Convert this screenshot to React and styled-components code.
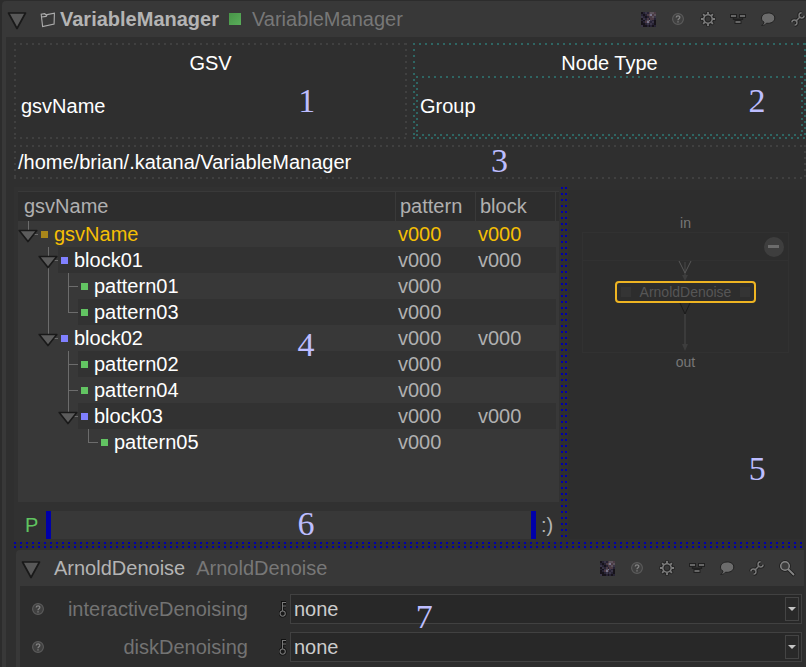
import React from 'react';
import styled, { createGlobalStyle, css } from 'styled-components';

const Global = createGlobalStyle`
  * { box-sizing: border-box; }
  body {
    margin: 0;
    background: #2c2c2c;
    color: #fff;
    font: 20px/26px "Liberation Sans", Arial, sans-serif;
    overflow-x: hidden;
  }
  button, input, select { font: inherit; color: inherit; }
`;

const dots = (color) => css`
  background-image:
    repeating-linear-gradient(90deg, ${color} 0 2px, transparent 2px 6px),
    repeating-linear-gradient(90deg, ${color} 0 2px, transparent 2px 6px),
    repeating-linear-gradient(180deg, ${color} 0 2px, transparent 2px 6px),
    repeating-linear-gradient(180deg, ${color} 0 2px, transparent 2px 6px);
  background-repeat: no-repeat;
`;

const Page = styled.main`
  padding: 1px 0 0 2px;
  overflow: hidden;
`;

const Panel = styled.section`
  background: #383838;
  border-radius: 4px 0 0 0;
  padding-left: 4px;
`;

const PanelHeader = styled.header`
  display: flex;
  align-items: center;
  height: 36px;
  overflow: hidden;
  white-space: nowrap;
`;

const Toggle = styled.button`
  display: flex;
  flex: none;
  width: 34px;
  padding: 4px 0 0 1px;
  border: 0;
  background: none;
`;

const Title = styled.h1`
  margin: 0;
  font-size: 20px;
  font-weight: ${(p) => (p.$bold ? 700 : 400)};
  color: #b4b4b4;
`;

const Subtitle = styled.span`
  margin-left: 11px;
  color: #777;
`;

const Status = styled.span`
  flex: none;
  width: 12px;
  height: 12px;
  margin-left: 10px;
  background: linear-gradient(135deg, #489448, #5aae5a);
`;

const FolderMark = styled.span`
  display: flex;
  flex: none;
  width: 20px;
`;

const Tools = styled.nav`
  display: flex;
  flex: none;
  margin-left: auto;
  margin-right: ${(p) => p.$shift || 0}px;
`;

const ToolButton = styled.button`
  display: grid;
  place-items: center;
  width: 30px;
  height: 30px;
  padding: 0;
  border: 0;
  background: none;
`;

const Content = styled.div`
  background: #2f2f2f;
  padding: 6px 0 5px 8px;
`;

const TopRow = styled.div`
  display: grid;
  grid-template-columns: 1fr 1fr;
  gap: 6px;
`;

const DottedBox = styled.section`
  position: relative;
  padding: 3px;
  ${(p) => dots(p.$color)}
  background-position: top left, bottom left, top left, top right;
  background-size: 100% 2px, 100% 2px, 2px 100%, 2px 100%;
`;

const BoxTitle = styled.h2`
  margin: 0;
  height: 30px;
  padding-top: 4px;
  font-size: 20px;
  font-weight: 400;
  text-align: center;
`;

const ValueBox = styled.div`
  height: 60px;
  padding-left: 4px;
  line-height: 60px;
  ${(p) => p.$color && dots(p.$color)}
  background-position: top left, bottom left, top left, top right;
  background-size: 100% 2px, 100% 2px, 2px 100%, 2px 100%;
`;

const PathBox = styled(DottedBox)`
  margin-top: 6px;
  height: 34px;
  padding-left: 4px;
  line-height: 28px;
`;

const Marker = styled.span`
  position: absolute;
  color: #bdbdff;
  font: 34px/34px "Liberation Serif", "Times New Roman", serif;
  pointer-events: none;
  transform: translate(-50%, -50%);
  left: ${(p) => p.$left};
  top: ${(p) => p.$top};
`;

const Split = styled.div`
  display: grid;
  grid-template-columns: 547fr 6px 239fr;
  margin-top: 8px;
`;

const TreeSide = styled.section`
  position: relative;
  padding: 4px 2px 2px 4px;
  background: #313131;
`;

const TreeView = styled.div`
  min-height: 311px;
  background: #383838;
`;

const Table = styled.table`
  width: 100%;
  border-spacing: 0;
  table-layout: fixed;
`;

const NameCol = styled.col``;
const ValueCol = styled.col`width: 80px;`;
const TailCol = styled.col`width: 3px;`;

const HeadCell = styled.th`
  height: 30px;
  padding: 0 0 2px ${(p) => (p.$first ? 6 : 4)}px;
  background: #2d2d2d;
  border-top: 1px solid #393939;
  border-right: 1px solid #393939;
  color: #b0b0b0;
  font-weight: 400;
  text-align: left;
`;

const TailHead = styled.td`
  padding: 0;
  background: #2d2d2d;
  border-top: 1px solid #393939;
`;

const Row = styled.tr`
  height: 26px;
  color: ${(p) => (p.$active ? '#f5bf05' : '#fff')};
`;

const Cell = styled.td`
  padding: 0;
`;

const ValueCell = styled.td`
  padding: 0 0 0 2px;
  background: ${(p) => (p.$alt ? '#323232' : 'transparent')};
  color: ${(p) => (p.$active ? '#f5bf05' : '#b0b0b0')};
`;

const NameLine = styled.div`
  display: flex;
  height: 26px;
`;

const line = 'linear-gradient(#6c6c6c, #6c6c6c)';
const guides = {
  none: 'none',
  full: `${line} 10px 0 / 1px 26px no-repeat`,
  top: `${line} 10px 0 / 1px 14px no-repeat, ${line} 10px 13px / 10px 1px no-repeat`,
  tee: `${line} 10px 0 / 1px 26px no-repeat, ${line} 10px 13px / 10px 1px no-repeat`,
};

const Guide = styled.span`
  display: flex;
  flex: none;
  width: 20px;
  padding-top: 8px;
  background: ${(p) => guides[p.$kind]};
`;

const RowToggle = styled.button`
  display: flex;
  padding: 0;
  border: 0;
  background: none;
  height: 14px;
`;

const Name = styled.div`
  display: flex;
  flex: 1;
  align-items: center;
  gap: 6px;
  padding-left: 3px;
  background: ${(p) => (p.$alt ? '#323232' : 'transparent')};
`;

const Dot = styled.span`
  width: 7px;
  height: 7px;
  background: ${(p) => p.$color};
`;

const FilterRow = styled.form`
  display: flex;
  align-items: center;
  height: 30px;
  margin-top: 8px;
`;

const FilterLabel = styled.label`
  width: 28px;
  padding-left: 7px;
  color: #60c460;
`;

const FilterInput = styled.input`
  flex: 1;
  min-width: 0;
  height: 28px;
  border: 0 solid #0000aa;
  border-width: 0 5px;
  background: #383838;
  outline: 0;
`;

const Smile = styled.span`
  width: 23px;
  padding-left: 5px;
  color: #b4b4b4;
`;

const VerticalDots = styled.div`
  margin-bottom: 3px;
  background:
    repeating-linear-gradient(180deg, #0000aa 0 2px, transparent 2px 6px) left / 2px 100% no-repeat,
    repeating-linear-gradient(180deg, #0000aa 0 2px, transparent 2px 6px) right / 2px 100% no-repeat;
`;

const HorizontalDots = styled.div`
  height: 6px;
  background:
    repeating-linear-gradient(90deg, #0000aa 0 2px, transparent 2px 6px) top / 100% 2px no-repeat,
    repeating-linear-gradient(90deg, #0000aa 0 2px, transparent 2px 6px) bottom / 100% 2px no-repeat;
`;

const Graph = styled.section`
  position: relative;
  display: flex;
  flex-direction: column;
  align-items: center;
  margin: 3px 3px 3px 1px;
  padding-top: 24px;
  background: #2d2d2d;
  color: #777;
  font-size: 14px;
  line-height: 18px;
`;

const Frame = styled.div`
  display: flex;
  flex-direction: column;
  align-items: center;
  width: 88%;
  height: 121px;
  border: 1px solid #313131;
`;

const FrameBar = styled.div`
  display: flex;
  justify-content: flex-end;
  align-items: center;
  align-self: stretch;
  height: 28px;
  padding-right: 4px;
  border-bottom: 1px solid #313131;
`;

const Collapse = styled.button`
  display: grid;
  place-items: center;
  width: 20px;
  height: 20px;
  padding: 0;
  border: 0;
  border-radius: 50%;
  background: #3e3e3e;
`;

const Minus = styled.span`
  width: 11px;
  height: 3px;
  background: #6c6c6c;
`;

const GraphNode = styled.div`
  display: flex;
  flex: none;
  align-items: center;
  justify-content: space-between;
  width: 141px;
  height: 22px;
  padding: 0 4px;
  border: 2px solid #eeb422;
  border-radius: 4px;
  color: #565656;
`;

const Port = styled.span`
  width: 10px;
  height: 10px;
  background: #343434;
`;

const PortLabel = styled.span``;

const SubPanel = styled(Panel)`
  margin: 2px 2px 0;
`;

const Params = styled.div`
  display: grid;
  gap: 8px;
  margin-bottom: -5px;
  padding: 8px 2px 5px 0;
  background: #2d2d2d;
`;

const Param = styled.div`
  display: grid;
  grid-template-columns: 36px 192px 42px 1fr;
  align-items: center;
  height: 30px;
`;

const ParamLabel = styled.label`
  color: #737373;
  text-align: right;
`;

const HelpSlot = styled.span`
  display: grid;
  place-items: center;
`;

const KeySlot = styled.span`
  display: flex;
  padding-left: 31px;
`;

const SelectWrap = styled.div`
  position: relative;
  height: 30px;
`;

const Select = styled.select`
  width: 100%;
  height: 30px;
  padding: 0 0 0 3px;
  border: 1px solid #414141;
  border-radius: 0;
  background: #282828;
  color: #ccc;
  appearance: none;
  outline: 0;
`;

const SelectArrow = styled.span`
  position: absolute;
  top: 3px;
  right: 3px;
  display: grid;
  place-items: center;
  width: 14px;
  height: 24px;
  border: 1px solid #444;
  background: #292929;
  pointer-events: none;
`;

const Big = () => (
  <svg width="20" height="18" viewBox="0 0 20 18">
    <path d="M1.5 1h17L10 16.5z" fill="#585858" stroke="#191919" strokeWidth="1.7" strokeLinejoin="round" />
  </svg>
);

const Small = () => (
  <svg width="20" height="14" viewBox="0 0 20 14">
    <path d="M1.2 1.5h17.6L10 12.6z" fill="#5c5c5c" stroke="#191919" strokeWidth="1.6" strokeLinejoin="round" />
  </svg>
);

const Folder = () => (
  <svg width="16" height="17" viewBox="0 0 16 17" fill="none" stroke="#adadad" strokeWidth="1.1">
    <path d="M2.6 15.5 1.2 3.2l3.6-.6 1 1.3 8.6-1.8-.3 11L2.6 15.5zM1.6 6l4.5-.6 1.2-1.7" />
  </svg>
);

const thumbRows = [
  '01213443', '10134534', '21013342', '02131331',
  '10245210', '01353120', '00121210', '20010101',
];
const thumbColors = ['#17131a', '#272335', '#3a3547', '#4b3a44', '#5c525a', '#77758c'];

const Thumb = () => (
  <svg width="15" height="15" viewBox="0 0 8 8" shapeRendering="crispEdges">
    {thumbRows.flatMap((r, y) =>
      [...r].map((c, x) => <rect key={`${x}-${y}`} x={x} y={y} width="1" height="1" fill={thumbColors[c]} />)
    )}
  </svg>
);

const Help = () => (
  <svg width="14" height="14" viewBox="0 0 14 14">
    <circle cx="7" cy="7" r="5.4" fill="#404040" stroke="#5c5c5c" strokeWidth="1.1" />
    <path d="M5.2 5.5C5.3 3.4 9 3.5 8.8 5.5 8.7 6.8 7 6.7 7 8.2M7 9.3v1.3" fill="none" stroke="#838383" strokeWidth="1.3" />
  </svg>
);

const Gear = () => (
  <svg width="16" height="16" viewBox="0 0 16 16" fill="none">
    <path d="M8 .4v15.2M.4 8h15.2M2.6 2.6l10.8 10.8M13.4 2.6 2.6 13.4" stroke="#222" strokeWidth="3.4" />
    <circle cx="8" cy="8" r="4.7" fill="#383838" stroke="#222" strokeWidth="3" />
    <path d="M8 1v2.5M8 12.5V15M1 8h2.5M12.5 8H15M3.1 3.1l1.7 1.7M11.2 11.2l1.7 1.7M12.9 3.1l-1.7 1.7M4.8 11.2l-1.7 1.7" stroke="#7c7c7c" strokeWidth="1.8" />
    <circle cx="8" cy="8" r="4.2" fill="#383838" stroke="#7c7c7c" strokeWidth="1.6" />
    <circle cx="8" cy="8" r="2.9" stroke="#242424" strokeWidth="1" />
  </svg>
);

const Nodes = () => (
  <svg width="18" height="12" viewBox="0 0 18 12" fill="#666" stroke="#202020">
    <path d="M4.5 4v2.2h9V4M9 6v2" fill="none" strokeWidth="1.4" />
    <rect x="1.5" y="1.5" width="6" height="3" />
    <rect x="10.5" y="1.5" width="6" height="3" />
    <rect x="6" y="7.5" width="6" height="3" />
  </svg>
);

const Bubble = () => (
  <svg width="16" height="15" viewBox="0 0 16 15">
    <path d="M8.3 1C4.5 1 1.5 3 1.5 6.1c0 1.8.9 3.2 2.5 4.1-.2 1.4-1 2.4-2.4 3.2 2.2.1 3.8-.7 4.9-2.2 4.5.7 8.3-1.7 8.3-5.2C14.8 3 12 1 8.3 1z" fill="#6c6c6c" stroke="#202020" />
  </svg>
);

const wrenchPath = 'M5.6 10.4l4.8-4.8M11.6 1.8a2.6 2.6 0 1 0 2.6 2.8M1.8 11.4a2.6 2.6 0 1 1 2.8 2.8';

const Wrench = () => (
  <svg width="16" height="16" viewBox="0 0 16 16" fill="none">
    <path d={wrenchPath} stroke="#1d1d1d" strokeWidth="3.2" />
    <path d={wrenchPath} stroke="#7a7a7a" strokeWidth="1.4" />
  </svg>
);

const Search = () => (
  <svg width="17" height="17" viewBox="0 0 17 17" fill="none">
    <circle cx="6" cy="6" r="4.3" stroke="#1b1b1b" strokeWidth="3" />
    <path d="m9 9 6.4 6.4" stroke="#1b1b1b" strokeWidth="3.6" />
    <circle cx="6" cy="6" r="4.3" fill="#3c3c3c" stroke="#868686" strokeWidth="1.5" />
    <path d="m9 9 6 6" stroke="#868686" strokeWidth="1.8" />
  </svg>
);

const Key = () => (
  <svg width="8" height="17" viewBox="0 0 8 17" fill="none">
    <path d="M3.5 11V1.5H7M3.5 5H7" stroke="#111" strokeWidth="3" />
    <circle cx="3.7" cy="12.6" r="2.6" stroke="#111" strokeWidth="2.8" />
    <path d="M3.5 10V1.5H7M3.5 5H7" stroke="#777" strokeWidth="1.1" />
    <circle cx="3.7" cy="12.6" r="2.6" fill="#181818" stroke="#777" strokeWidth="1.1" />
  </svg>
);

const InLink = () => (
  <svg width="14" height="20" viewBox="0 0 14 20">
    <path d="M7 1v14" stroke="#3a3a3a" strokeWidth="2" />
    <path d="m1 0 6 12 6-12" fill="none" stroke="#585858" />
    <path d="M4 14h6l-3 6z" fill="#3d3d3d" />
  </svg>
);

const OutLink = () => (
  <svg width="14" height="49" viewBox="0 0 14 49">
    <path d="M7 11v32" stroke="#3b3b3b" strokeWidth="2" />
    <path d="m2 0 5 11 5-11" fill="none" stroke="#1b1b1b" />
    <path d="M4 41h6l-3 7z" fill="#3d3d3d" />
  </svg>
);

const Caret = () => (
  <svg width="8" height="4" viewBox="0 0 8 4"><path d="M0 0h8L4 4z" fill="#c4c4c4" /></svg>
);

const toolIcons = [
  ['Thumbnail', Thumb], ['Help', Help], ['Settings', Gear], ['Nodes', Nodes],
  ['Comment', Bubble], ['Tools', Wrench], ['Search', Search],
];

const Toolbar = ({ count, shift }) => (
  <Tools $shift={shift}>
    {toolIcons.slice(0, count).map(([label, Icon]) => (
      <ToolButton key={label} type="button" aria-label={label}><Icon /></ToolButton>
    ))}
  </Tools>
);

const GREEN = '#62c462';
const BLUE = '#8080ff';

const tree = [
  { name: 'gsvName', color: '#a8861a', guides: ['top'], open: true, pattern: 'v000', block: 'v000', active: true },
  { name: 'block01', color: BLUE, guides: ['none', 'tee'], open: true, pattern: 'v000', block: 'v000' },
  { name: 'pattern01', color: GREEN, guides: ['none', 'full', 'tee'], pattern: 'v000' },
  { name: 'pattern03', color: GREEN, guides: ['none', 'full', 'top'], pattern: 'v000' },
  { name: 'block02', color: BLUE, guides: ['none', 'top'], open: true, pattern: 'v000', block: 'v000' },
  { name: 'pattern02', color: GREEN, guides: ['none', 'none', 'tee'], pattern: 'v000' },
  { name: 'pattern04', color: GREEN, guides: ['none', 'none', 'tee'], pattern: 'v000' },
  { name: 'block03', color: BLUE, guides: ['none', 'none', 'top'], open: true, pattern: 'v000', block: 'v000' },
  { name: 'pattern05', color: GREEN, guides: ['none', 'none', 'none', 'top'], pattern: 'v000' },
];

const TreeRow = ({ item, alt }) => (
  <Row $active={item.active}>
    <Cell>
      <NameLine>
        {item.guides.map((kind, i) => (
          <Guide key={i} $kind={kind}>
            {item.open && i === item.guides.length - 1 && (
              <RowToggle type="button" aria-label={`Collapse ${item.name}`}><Small /></RowToggle>
            )}
          </Guide>
        ))}
        <Name $alt={alt}><Dot $color={item.color} />{item.name}</Name>
      </NameLine>
    </Cell>
    <ValueCell $alt={alt} $active={item.active}>{item.pattern}</ValueCell>
    <ValueCell $alt={alt} $active={item.active}>{item.block}</ValueCell>
  </Row>
);

export default function App() {
  return (
    <Page>
      <Global />
      <Panel>
        <PanelHeader>
          <Toggle type="button" aria-label="Collapse VariableManager"><Big /></Toggle>
          <FolderMark><Folder /></FolderMark>
          <Title $bold>VariableManager</Title>
          <Status />
          <Subtitle>VariableManager</Subtitle>
          <Toolbar count={6} shift={-7} />
        </PanelHeader>
        <Content>
          <TopRow>
            <DottedBox $color="#404040">
              <BoxTitle>GSV</BoxTitle>
              <ValueBox>gsvName</ValueBox>
              <Marker $left="74.5%" $top="60%">1</Marker>
            </DottedBox>
            <DottedBox $color="#2e6663">
              <BoxTitle>Node Type</BoxTitle>
              <ValueBox $color="#2e6663">Group</ValueBox>
              <Marker $left="87.5%" $top="60%">2</Marker>
            </DottedBox>
          </TopRow>
          <PathBox $color="#404040">
            /home/brian/.katana/VariableManager
            <Marker $left="61.3%" $top="46%">3</Marker>
          </PathBox>
          <Split>
            <TreeSide>
              <TreeView>
                <Table>
                  <colgroup><NameCol /><ValueCol /><ValueCol /><TailCol /></colgroup>
                  <thead>
                    <tr>
                      <HeadCell $first>gsvName</HeadCell>
                      <HeadCell>pattern</HeadCell>
                      <HeadCell>block</HeadCell>
                      <TailHead />
                    </tr>
                  </thead>
                  <tbody>
                    {tree.map((item, i) => <TreeRow key={item.name} item={item} alt={i % 2 === 1} />)}
                  </tbody>
                </Table>
              </TreeView>
              <FilterRow>
                <FilterLabel htmlFor="filter">P</FilterLabel>
                <FilterInput id="filter" />
                <Smile>:)</Smile>
              </FilterRow>
              <Marker $left="53.4%" $top="44.5%">4</Marker>
              <Marker $left="53.4%" $top="95%">6</Marker>
            </TreeSide>
            <VerticalDots />
            <Graph>
              <PortLabel>in</PortLabel>
              <Frame>
                <FrameBar>
                  <Collapse type="button" aria-label="Collapse group"><Minus /></Collapse>
                </FrameBar>
                <InLink />
                <GraphNode><Port />ArnoldDenoise<Port /></GraphNode>
                <OutLink />
              </Frame>
              <PortLabel>out</PortLabel>
              <Marker $left="80.5%" $top="80%">5</Marker>
            </Graph>
          </Split>
          <HorizontalDots />
          <SubPanel>
            <PanelHeader>
              <Toggle type="button" aria-label="Collapse ArnoldDenoise"><Big /></Toggle>
              <Title as="h2">ArnoldDenoise</Title>
              <Subtitle>ArnoldDenoise</Subtitle>
              <Toolbar count={7} shift={2} />
            </PanelHeader>
            <Params>
              {['interactiveDenoising', 'diskDenoising'].map((name) => (
                <Param key={name}>
                  <HelpSlot><Help /></HelpSlot>
                  <ParamLabel htmlFor={name}>{name}</ParamLabel>
                  <KeySlot><Key /></KeySlot>
                  <SelectWrap>
                    <Select id={name}><option>none</option></Select>
                    <SelectArrow><Caret /></SelectArrow>
                    {name === 'interactiveDenoising' && <Marker $left="26.2%" $top="75%">7</Marker>}
                  </SelectWrap>
                </Param>
              ))}
            </Params>
          </SubPanel>
        </Content>
      </Panel>
    </Page>
  );
}
